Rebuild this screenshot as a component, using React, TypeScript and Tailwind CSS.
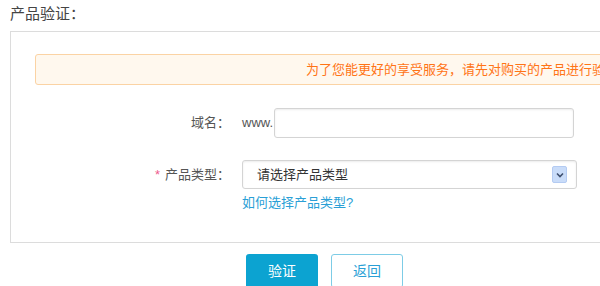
import React from "react";

export default function App() {
  return (
    <div
      className="w-[600px] h-[286px] overflow-hidden bg-white relative"
      style={{ fontFamily: '"Liberation Sans", "Noto Sans CJK SC", sans-serif' }}
    >
      <div className="pl-[10px] pt-[4px] h-[31px] text-[15px] leading-[19px] text-[#444]">产品验证：</div>
      <div className="ml-[10px] w-[900px] h-[212px] border border-[#dcdcdc] pt-[22px] pl-[24px] pr-[24px]">
        <div className="h-[31px] rounded-[3px] border border-[#fbd3a4] bg-[#fff8ee] flex items-center justify-start whitespace-nowrap text-[13px] text-[#ff7416] pl-[270px]">
          为了您能更好的享受服务，请先对购买的产品进行验证
        </div>
        <div className="flex items-center mt-[23px] -ml-[24px]">
          <div className="w-[219px] text-right text-[13px] text-[#555]">域名：</div>
          <div className="ml-[12px] text-[13px] text-[#555]">www.</div>
          <div className="ml-[1px] w-[300px] h-[30px] rounded-[3px] border border-[#d4d4d4] shadow-[inset_0_1px_2px_rgba(0,0,0,0.08)] bg-white" />
        </div>
        <div className="flex items-center mt-[22px] -ml-[24px]">
          <div className="w-[219px] text-right text-[13px] text-[#555]">
            <span className="text-[#ee5b8e] mr-[5px]">*</span>产品类型：
          </div>
          <div className="ml-[12px] w-[335px] h-[29px] rounded-[3px] border border-[#d4d4d4] shadow-[inset_0_1px_2px_rgba(0,0,0,0.08)] bg-white flex items-center pl-[14px] pr-[9px]">
            <span className="flex-1 text-[13px] text-[#333]">请选择产品类型</span>
            <div className="w-[15px] h-[17px] rounded-[2px] bg-[#c9dcf9] border border-[#b4cbf2] flex items-center justify-center">
              <svg width="8" height="6" viewBox="0 0 8 6">
                <path d="M1 1.5 L4 4.5 L7 1.5" fill="none" stroke="#3e4f6e" strokeWidth="1.6" />
              </svg>
            </div>
          </div>
        </div>
        <div className="ml-[207px] mt-[6px] text-[13px] leading-[16px] text-[#2a9fd6]">如何选择产品类型?</div>
      </div>
      <div className="flex mt-[11px] ml-[246px] gap-[13px]">
        <div className="w-[72px] h-[34px] rounded-[3px] bg-[#0ca3d1] text-white text-[14px] flex items-center justify-center">验证</div>
        <div className="w-[72px] h-[34px] rounded-[3px] border border-[#7dcce6] bg-white text-[#2a9fd6] text-[14px] flex items-center justify-center">返回</div>
      </div>
    </div>
  );
}
